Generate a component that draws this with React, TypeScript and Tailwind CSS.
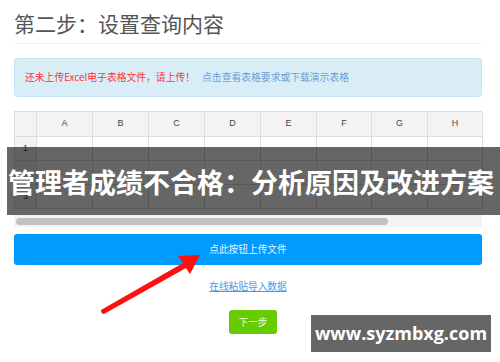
import React from "react";

const cols = ["A", "B", "C", "D", "E", "F", "G", "H"];

export default function App() {
  const font = { fontFamily: '"Noto Sans CJK SC", "Noto Sans", sans-serif' };
  return (
    <div className="relative w-[500px] h-[362px] overflow-hidden bg-white" style={font}>
      <div className="w-[468px] ml-[14px]">
        <div className="h-[43px] pt-[10px] text-[21px] leading-[26px] text-[#555]">第二步：设置查询内容</div>
        <div className="h-px bg-[#eeeeee]" />
        <div className="mt-[14px] h-[39px] rounded-[3px] border border-[#c4e6f3] bg-[#d9edf7] flex items-center pl-[10px] text-[9.8px] leading-none">
          <span className="text-[#ff3333]">还未上传Excel电子表格文件，请上传！</span>
          <span className="ml-[7px] text-[#6a9fd4]">点击查看表格要求或下载演示表格</span>
        </div>
        <div className="mt-[14px] border-l border-t border-[#dddddd] grid grid-cols-[22px_56px_56px_56px_56px_56px_55px_56px_55px]" style={{ fontFamily: '"Liberation Sans", Arial, sans-serif' }}>
          <div className="h-[25px] bg-[#f3f3f3] border-r border-b border-[#dddddd]" />
          {cols.map((c) => (
            <div key={c} className="h-[25px] bg-[#f3f3f3] border-r border-b border-[#dddddd] flex items-center justify-center text-[9px] text-[#444]">
              {c}
            </div>
          ))}
          {[1, 2, 3].map((r) => (
            <React.Fragment key={r}>
              <div className="h-[24px] bg-[#f3f3f3] border-r border-b border-[#dddddd] flex items-center justify-center text-[9px] text-[#444]">
                {r}
              </div>
              {cols.map((c) => (
                <div key={c} className="h-[24px] bg-white border-r border-b border-[#dddddd]" />
              ))}
            </React.Fragment>
          ))}
        </div>
        <div className="mt-[6px] h-[12px] bg-[#f4f4f4] pt-[3px] pl-[2px]">
          <div className="h-[7px] w-[372px] rounded-full bg-[#c1c1c1]" />
        </div>
        <div className="mt-[7px] h-[31px] rounded-[3px] bg-[#009bff] flex items-center justify-center text-[9.7px] text-[#e6f3ff]">
          点此按钮上传文件
        </div>
        <div className="mt-[14px] flex justify-center">
          <span className="text-[9.7px] leading-[14px] text-[#3d9bef] underline">在线粘贴导入数据</span>
        </div>
        <div className="mt-[17px] flex justify-center pl-[10px]">
          <div className="w-[48px] h-[24px] rounded-[3px] bg-[#66cc00] flex items-center justify-center text-[9.7px] text-[#eaffd6]">
            下一步
          </div>
        </div>
      </div>

      <div className="absolute left-[7px] top-[147px] w-[493px] h-[68px] bg-black/60 flex items-center pl-[1px] text-[27px] font-bold text-white leading-none whitespace-nowrap">
        管理者成绩不合格：分析原因及改进方案
      </div>

      <svg className="absolute left-0 top-0" width="500" height="362" viewBox="0 0 500 362">
        <path d="M101 310 Q101 314 104 314 L186 268 L190 274 L200 255 L178 256 L183 263 Z" fill="#ff1010" />
      </svg>

      <div className="absolute left-[311px] top-[315px] w-[180px] h-[37px] bg-[#666666] flex items-center justify-center text-[18px] font-bold text-white" style={{ fontFamily: '"Open Sans", "Noto Sans", sans-serif' }}>
        www.syzmbxg.com
      </div>
    </div>
  );
}
